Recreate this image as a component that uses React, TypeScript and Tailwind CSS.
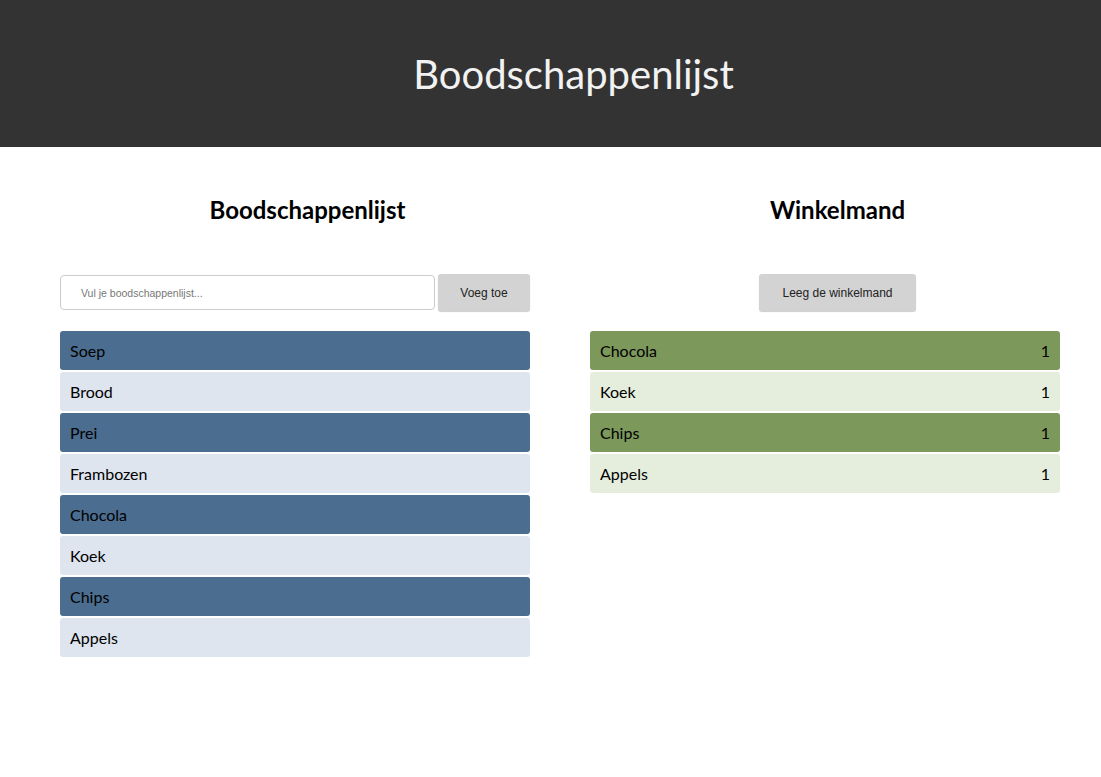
import React from 'react';

const lijst = ['Soep', 'Brood', 'Prei', 'Frambozen', 'Chocola', 'Koek', 'Chips', 'Appels'];
const mand = [
  { naam: 'Chocola', aantal: 1 },
  { naam: 'Koek', aantal: 1 },
  { naam: 'Chips', aantal: 1 },
  { naam: 'Appels', aantal: 1 },
];

const App: React.FC = () => {
  return (
    <div className="min-h-screen bg-white font-['Lato',sans-serif] text-black">
      <header className="h-[147px] bg-[#333333] flex items-center justify-center">
        <h1 className="text-[40px] text-[#f2f2f2] font-normal pl-[46px]">Boodschappenlijst</h1>
      </header>

      <main className="flex gap-[60px] pl-[60px] pr-[41px] pt-[48px]">
        {/* Boodschappenlijst */}
        <section className="w-[470px] shrink-0">
          <h2 className="text-[24px] font-bold text-center h-[30px] leading-[30px] pl-[25px]">Boodschappenlijst</h2>
          <div className="flex items-center gap-[3px] mt-[49px] h-[37px]">
            <input
              type="text"
              placeholder="Vul je boodschappenlijst..."
              className="w-[375px] h-[35px] border border-[#cccccc] rounded-[4px] pl-[20px] text-[10.5px] font-['Liberation_Sans',sans-serif] placeholder:text-[#777777] outline-none"
            />
            <button className="w-[92px] h-[37px] bg-[#d3d3d3] rounded-[3px] shadow-[0_1px_1px_rgba(0,0,0,0.2)] text-[12px] font-['Liberation_Sans',sans-serif] text-[#222]">
              Voeg toe
            </button>
          </div>
          <ul className="flex flex-col gap-[2px] mt-[20px]">
            {lijst.map((item, i) => (
              <li
                key={item}
                className={`h-[39px] flex items-center px-[10px] rounded-[3px] text-[16px] ${
                  i % 2 === 0 ? 'bg-[#4b6d8f]' : 'bg-[#dee5ef]'
                }`}
              >
                {item}
              </li>
            ))}
          </ul>
        </section>

        {/* Winkelmand */}
        <section className="w-[470px] shrink-0">
          <h2 className="text-[24px] font-bold text-center h-[30px] leading-[30px] pl-[25px]">Winkelmand</h2>
          <div className="flex justify-center mt-[49px] h-[37px] pl-[25px]">
            <button className="w-[157px] h-[37px] bg-[#d3d3d3] rounded-[3px] shadow-[0_1px_1px_rgba(0,0,0,0.2)] text-[12px] font-['Liberation_Sans',sans-serif] text-[#222]">
              Leeg de winkelmand
            </button>
          </div>
          <ul className="flex flex-col gap-[2px] mt-[20px]">
            {mand.map((item, i) => (
              <li
                key={item.naam}
                className={`h-[39px] flex items-center justify-between px-[10px] rounded-[3px] text-[16px] ${
                  i % 2 === 0 ? 'bg-[#7c985b]' : 'bg-[#e5eedd]'
                }`}
              >
                <span>{item.naam}</span>
                <span>{item.aantal}</span>
              </li>
            ))}
          </ul>
        </section>
      </main>
    </div>
  );
};

export default App;
